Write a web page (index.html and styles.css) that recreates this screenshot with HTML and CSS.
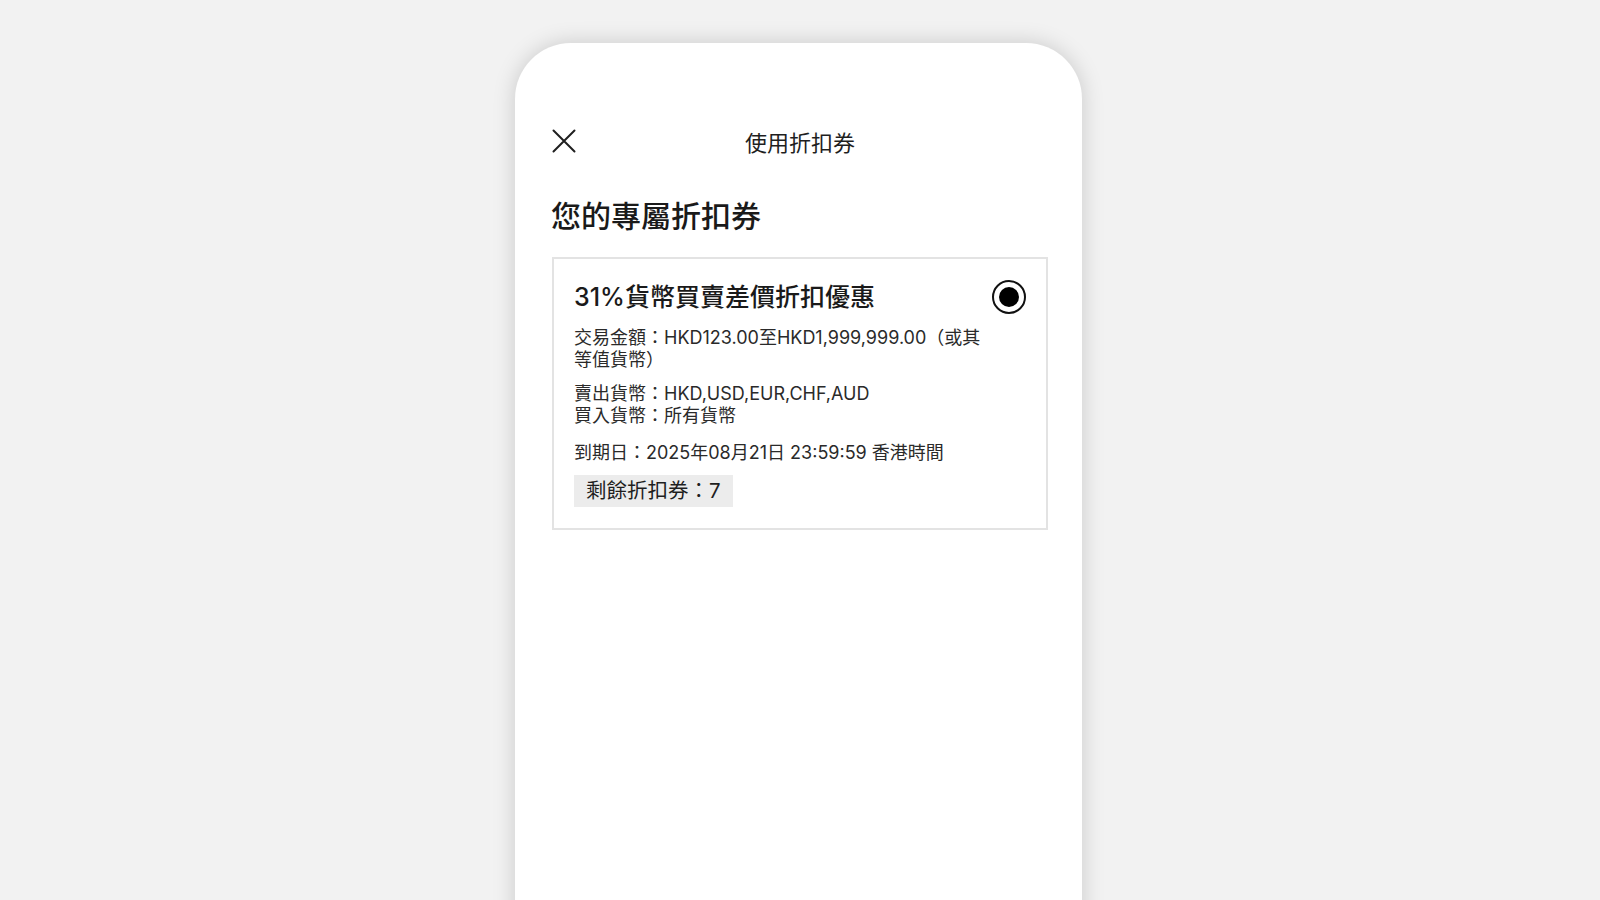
FILE: index.html
```html
<!DOCTYPE html>
<html lang="zh-Hant">
<head>
<meta charset="utf-8">
<title>使用折扣券</title>
<link rel="stylesheet" href="styles.css">
</head>
<body>
<div class="stage">
  <div class="phone">
    <div class="header">
      <div class="close">
        <svg width="24" height="24" viewBox="0 0 24 24"><path d="M1.5 1.5 L22.5 22.5 M22.5 1.5 L1.5 22.5" stroke="#1f1f1f" stroke-width="2" fill="none" stroke-linecap="round"/></svg>
      </div>
      <div class="title">使用折扣券</div>
      <div></div>
    </div>
    <h1 class="heading">您的專屬折扣券</h1>
    <div class="card">
      <div class="card-top">
        <div class="card-title">31%貨幣買賣差價折扣優惠</div>
        <div class="radio"><span class="dot"></span></div>
      </div>
      <div class="desc first">交易金額：HKD123.00至HKD1,999,999.00（或其等值貨幣）</div>
      <div class="desc">賣出貨幣：HKD,USD,EUR,CHF,AUD<br>買入貨幣：所有貨幣</div>
      <div class="desc">到期日：2025年08月21日 23:59:59 香港時間</div>
      <div class="tag">剩餘折扣券：7</div>
    </div>
  </div>
</div>
</body>
</html>
```
FILE: styles.css
```css
html, body {
  margin: 0;
  padding: 0;
  height: 100%;
}
body {
  background: #f2f2f2;
  overflow: hidden;
  font-family: "Inter", "Noto Sans CJK TC", sans-serif;
  color: #1f1f1f;
}
.stage {
  padding-top: 43px;
  padding-left: 515px;
}
.phone {
  width: 567px;
  height: 900px;
  background: #ffffff;
  border-radius: 56px 56px 0 0;
  box-shadow: 0 0 22px rgba(0, 0, 0, 0.17);
  padding: 76px 34px 0 37px;
  box-sizing: border-box;
}
.header {
  display: grid;
  grid-template-columns: 1fr auto 1fr;
  align-items: center;
  height: 44px;
}
.close {
  display: flex;
  align-items: center;
}
.close svg {
  display: block;
}
.title {
  font-size: 22px;
  color: #1f1f1f;
}
.heading {
  margin: 33px 0 0 -1px;
  font-size: 30px;
  line-height: 40px;
  font-weight: 500;
  color: #1a1a1a;
}
.card {
  margin-top: 21px;
  border: 2px solid #e3e3e3;
  padding: 22px 20px 21px 20px;
  width: 496px;
  box-sizing: border-box;
}
.card-top {
  display: flex;
  justify-content: space-between;
  align-items: center;
  height: 32px;
}
.card-title {
  font-size: 25px;
  line-height: 32px;
  font-weight: 500;
  color: #1a1a1a;
}
.radio {
  width: 34px;
  height: 34px;
  box-sizing: border-box;
  border: 2.5px solid #111;
  border-radius: 50%;
  display: flex;
  align-items: center;
  justify-content: center;
}
.dot {
  width: 20px;
  height: 20px;
  border-radius: 50%;
  background: #000;
}
.desc {
  font-size: 18px;
  line-height: 22px;
  color: #2a2a2a;
  max-width: 420px;
  margin-top: 12px;
}
.desc.first {
  margin-top: 14px;
}
.desc + .desc + .desc {
  margin-top: 15px;
}
.tag {
  display: inline-block;
  margin-top: 11px;
  background: #ececec;
  font-size: 20.5px;
  line-height: 32px;
  padding: 0 12px;
  color: #1f1f1f;
}
```
